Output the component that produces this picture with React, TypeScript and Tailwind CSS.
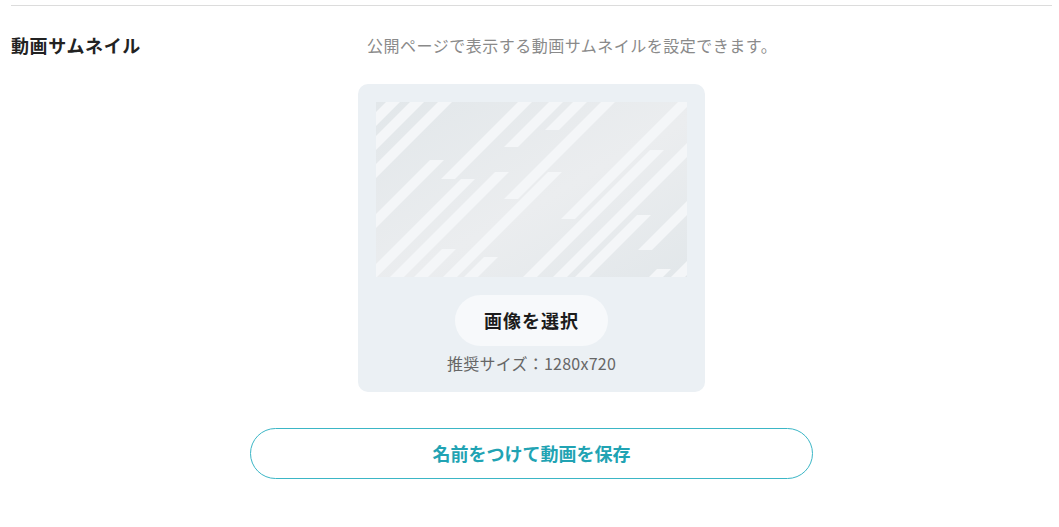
const stripes: [number, number, number][] = [
  [10, 0, 175],
  [34, 0, 175],
  [62, 0, 175],
  [112, 58, 175],
  [142, 0, 77],
  [162, 77, 175],
  [173, 0, 45],
  [197, 0, 28],
  [189, 70, 175],
  [213, 147, 175],
  [225, 0, 97],
  [242, 70, 175],
  [263, 155, 175],
  [302, 0, 117],
  [322, 48, 175],
  [352, 0, 175],
  [374, 113, 175],
  [410, 0, 148],
  [448, 167, 175],
  [470, 0, 175],
];

const W = 14;

function Placeholder() {
  return (
    <svg width="311" height="175" viewBox="0 0 311 175" className="block">
      <defs>
        <linearGradient id="bg" x1="0" y1="0" x2="1" y2="1">
          <stop offset="0" stopColor="#e2e7ea" />
          <stop offset="0.55" stopColor="#ebedef" />
          <stop offset="1" stopColor="#e2e7ea" />
        </linearGradient>
      </defs>
      <rect width="311" height="175" fill="url(#bg)" />
      {stripes.map(([c, ya, yb], i) => (
        <polygon
          key={i}
          fill="#f4f6f8"
          points={`${c - ya},${ya} ${c + W - ya},${ya} ${c + W - yb},${yb} ${c - yb},${yb}`}
        />
      ))}
    </svg>
  );
}

export default function App() {
  return (
    <div
      className="min-h-[527px] bg-white pl-[11px] pr-[7px] pt-[5px]"
      style={{ fontFamily: '"Noto Sans CJK JP", "Noto Sans", sans-serif' }}
    >
      <div className="border-t border-[#dcdcdc]" />

      <div className="mt-[27px] flex items-center">
        <h2 className="w-[356px] text-[18px] font-bold leading-6 tracking-[0.6px] text-[#222]">
          動画サムネイル
        </h2>
        <p className="text-[16px] leading-6 tracking-[0.5px] text-[#8a8a8a]">
          公開ページで表示する動画サムネイルを設定できます。
        </p>
      </div>

      <div className="mt-[27px] flex justify-center">
        <div className="flex w-[347px] flex-col items-center rounded-[10px] bg-[#ebf0f4] p-[18px] pb-[17px]">
          <Placeholder />
          <button className="mt-[18px] h-[51px] rounded-full bg-[#f7f9fb] px-[29px] text-[18px] font-bold tracking-[1px] text-[#1c1c1c]">
            画像を選択
          </button>
          <p className="mt-[5px] text-[16px] leading-6 tracking-[0.25px] text-[#666]">
            推奨サイズ：1280x720
          </p>
        </div>
      </div>

      <div className="mt-[36px] flex justify-center">
        <button className="h-[51px] w-[563px] rounded-full border border-[#3bb6c6] bg-white text-[18px] font-bold text-[#21a3b3]">
          名前をつけて動画を保存
        </button>
      </div>
    </div>
  );
}
